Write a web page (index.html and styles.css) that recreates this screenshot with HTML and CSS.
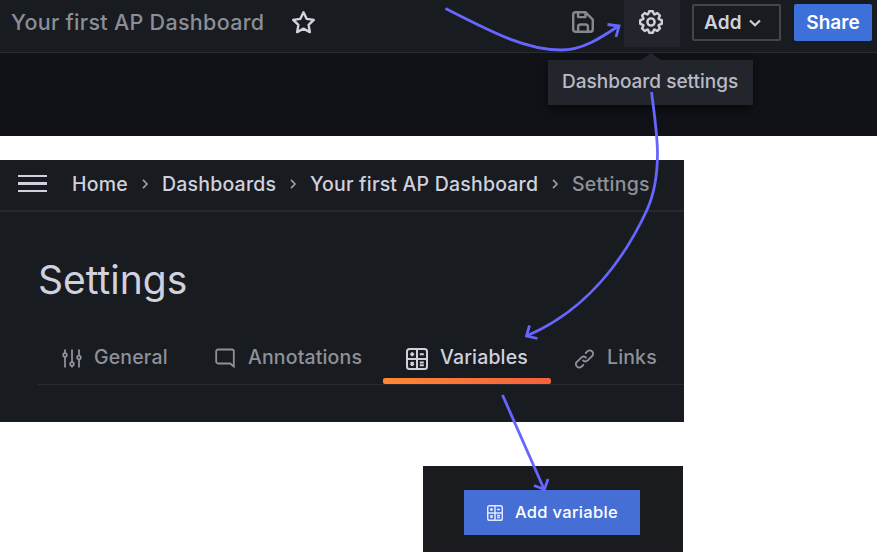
FILE: index.html
```html
<!DOCTYPE html>
<html lang="en">
<head>
<meta charset="utf-8">
<title>Dashboard settings</title>
<link rel="stylesheet" href="styles.css">
</head>
<body>
<main class="page">
  <section class="dashboard">
    <header class="toolbar">
      <span class="toolbar-title">Your first AP Dashboard</span>
      <svg class="star" viewBox="0 0 24 24"><path d="M12 2.200l3 6.300 6.900 1-5 4.800 1.200 6.900-6.100-3.300-6.100 3.300 1.200-6.900-5-4.800 6.900-1z"/></svg>
      <svg class="save" viewBox="3 3 18 18"><path d="M20.71,9.29l-6-6a1,1,0,0,0-.32-.21A1.09,1.09,0,0,0,14,3H6A3,3,0,0,0,3,6V18a3,3,0,0,0,3,3H18a3,3,0,0,0,3-3V10A1,1,0,0,0,20.71,9.29ZM9,5h4V7H9Zm6,14H9V16a1,1,0,0,1,1-1h4a1,1,0,0,1,1,1Zm4-1a1,1,0,0,1-1,1H17V16a3,3,0,0,0-3-3H10a3,3,0,0,0-3,3v3H6a1,1,0,0,1-1-1V6A1,1,0,0,1,6,5H7V8A1,1,0,0,0,8,9h6a1,1,0,0,0,1-1V6.41l4,4Z"/></svg>
      <div class="gear-tile">
        <svg class="gear" viewBox="2 2 20 20"><path d="M21.32,9.55l-1.89-.63.89-1.78A1,1,0,0,0,20.13,6L18,3.87a1,1,0,0,0-1.15-.19l-1.78.89-.63-1.89A1,1,0,0,0,13.5,2h-3a1,1,0,0,0-.95.68L8.92,4.57,7.14,3.68A1,1,0,0,0,6,3.87L3.87,6a1,1,0,0,0-.19,1.15l.89,1.78-1.89.63A1,1,0,0,0,2,10.5v3a1,1,0,0,0,.68.95l1.89.63-.89,1.78A1,1,0,0,0,3.87,18L6,20.13a1,1,0,0,0,1.15.19l1.78-.89.63,1.89a1,1,0,0,0,.95.68h3a1,1,0,0,0,.95-.68l.63-1.89,1.78.89A1,1,0,0,0,18,20.13L20.13,18a1,1,0,0,0,.19-1.15l-.89-1.78,1.89-.63A1,1,0,0,0,22,13.5v-3A1,1,0,0,0,21.32,9.55ZM20,12.78l-1.2.4A2,2,0,0,0,17.64,16l.57,1.14-1.1,1.1L16,17.64a2,2,0,0,0-2.79,1.16l-.4,1.2H11.22l-.4-1.2A2,2,0,0,0,8,17.64l-1.14.57-1.1-1.1L6.36,16A2,2,0,0,0,5.2,13.18L4,12.78V11.22l1.2-.4A2,2,0,0,0,6.36,8L5.79,6.89l1.1-1.1L8,6.36A2,2,0,0,0,10.82,5.2l.4-1.2h1.56l.4,1.2A2,2,0,0,0,16,6.36l1.14-.57,1.1,1.1L17.64,8a2,2,0,0,0,1.16,2.79l1.2.4ZM12,8a4,4,0,1,0,4,4A4,4,0,0,0,12,8Zm0,6a2,2,0,1,1,2-2A2,2,0,0,1,12,14Z"/></svg>
        <div class="tooltip">Dashboard settings</div>
      </div>
      <div class="add-menu"><span>Add</span><svg class="chevron" viewBox="0 0 14 10"><path d="M2 2.500l5 4.800 5-4.800"/></svg></div>
      <div class="share">Share</div>
    </header>
  </section>

  <section class="settings">
    <nav class="crumbs">
      <div class="menu"><i></i><i></i><i></i></div>
      <span class="crumb home">Home</span>
      <svg class="sep" viewBox="0 0 8 12"><path d="M2 1.800l4 4.200-4 4.200"/></svg>
      <span class="crumb boards">Dashboards</span>
      <svg class="sep" viewBox="0 0 8 12"><path d="M2 1.800l4 4.200-4 4.200"/></svg>
      <span class="crumb first">Your first AP Dashboard</span>
      <svg class="sep" viewBox="0 0 8 12"><path d="M2 1.800l4 4.200-4 4.200"/></svg>
      <span class="crumb current">Settings</span>
    </nav>
    <h1>Settings</h1>
    <div class="tabs">
      <div class="tab general">
        <svg viewBox="0 0 20 20"><path d="M3 0.500v3.500M3 8V18.500M10 0.500v12.500M10 17v1.500M17 0.500v6M17 10.500V18.500"/><circle cx="3" cy="6" r="1.800"/><circle cx="10" cy="15" r="1.800"/><circle cx="17" cy="8.500" r="1.800"/></svg>
        <span>General</span>
      </div>
      <div class="tab annotations">
        <svg viewBox="0 0 20 20"><path d="M3 1.500h14a1.800 1.800 0 0 1 1.800 1.800V18.500l-3.600-3H3a1.800 1.800 0 0 1-1.800-1.800V3.300A1.800 1.800 0 0 1 3 1.500z"/></svg>
        <span>Annotations</span>
      </div>
      <div class="tab variables">
        <svg viewBox="0 0 22 22"><rect x="1" y="1" width="20" height="20" rx="2.500"/><path d="M11 1v20M1 11h20M4.200 6.200h4M6.200 4.200v4M13.800 6.200h4M4.700 14.300l3 3M7.700 14.300l-3 3M13.800 14.500h4M13.800 17.300h4"/></svg>
        <span>Variables</span>
      </div>
      <div class="tab links">
        <svg viewBox="2 2 20 20"><path d="M10,17.55,8.23,19.27a2.47,2.47,0,0,1-3.5-3.5l4.54-4.55a2.46,2.46,0,0,1,3.39-.09l.12.1a1,1,0,0,0,1.4-1.43A2.75,2.75,0,0,0,14,9.59a4.46,4.46,0,0,0-6.09.22L3.31,14.36a4.48,4.48,0,0,0,6.33,6.33L11.37,19A1,1,0,0,0,10,17.55ZM20.69,3.31a4.49,4.49,0,0,0-6.33,0L12.63,5A1,1,0,0,0,14,6.45l1.73-1.72a2.47,2.47,0,0,1,3.5,3.5l-4.54,4.55a2.46,2.46,0,0,1-3.39.09l-.12-.1a1,1,0,0,0-1.4,1.43,2.75,2.75,0,0,0,.23.21,4.47,4.47,0,0,0,6.09-.22l4.55-4.55A4.49,4.49,0,0,0,20.69,3.31Z"/></svg>
        <span>Links</span>
      </div>
    </div>
  </section>

  <section class="new-variable">
    <div class="add-variable">
      <svg viewBox="0 0 22 22"><rect x="1" y="1" width="20" height="20" rx="2.500"/><path d="M11 1v20M1 11h20M4.200 6.200h4M6.200 4.200v4M13.800 6.200h4M4.700 14.300l3 3M7.700 14.300l-3 3M13.800 14.500h4M13.800 17.300h4"/></svg>
      <span>Add variable</span>
    </div>
  </section>

  <svg class="arrows" viewBox="0 0 877 552">
    <path d="M445.500 8.500C490 31 525 50 561 50C583 50 602 37 618.500 26"/>
    <path d="M607.500 24.500L619 26L616 37"/>
    <path d="M651.500 92C655 118 657.500 138 657.500 153C657.500 176 654 195 646.500 211C632 242 597 306 526.500 336"/>
    <path d="M529.500 325.500L526.500 336L537.500 338.500"/>
    <path d="M502.500 395L544 489"/>
    <path d="M534 485.500L544.500 489.500L548 479"/>
  </svg>
</main>
</body>
</html>
```
FILE: styles.css
```css
* { box-sizing: border-box; }
body { margin: 0; background: #fff; font-family: Inter, "Liberation Sans", sans-serif; }
svg { display: block; flex: none; }
span { white-space: nowrap; }
.page { position: relative; width: 877px; height: 552px; overflow: hidden; }

.dashboard { height: 136px; background: #111217; }
.toolbar { display: flex; height: 53px; padding-left: 11px; background: #181b1f; border-bottom: 1.500px solid #292c31; }
.toolbar-title { width: 280px; color: #8b8d97; font-size: 21.500px; font-weight: 450; line-height: 45px; letter-spacing: 0.300px; }
.star { width: 25px; height: 25px; margin-top: 10px; fill: none; stroke: #d2d3df; stroke-width: 2.300; stroke-linejoin: round; }
.save { width: 22px; height: 22px; margin: 11px 30px 0 256px; fill: #85878c; }
.gear-tile { position: relative; width: 56px; height: 47px; padding: 10px 0 0 15px; background: #22252b; }
.gear { width: 24px; height: 24px; fill: #d0d1d9; }
.tooltip { position: absolute; top: 60px; left: -76px; width: 205px; height: 45px; padding-left: 14px; background: #22252b; box-shadow: 0 4px 8px #08090c; color: #b9bac4; font-size: 19px; font-weight: 500; line-height: 43px; white-space: nowrap; }
.tooltip::before { content: ""; position: absolute; top: -7px; left: 93px; border: solid transparent; border-width: 0 10px 7px; border-bottom-color: #22252b; }
.add-menu { display: flex; align-items: center; gap: 6px; width: 89px; height: 37px; margin: 4px 13px 0 12px; padding-left: 10px; border: 2px solid #42454a; border-radius: 2px; color: #d0d1dc; font-size: 19px; font-weight: 600; letter-spacing: 0.200px; }
.chevron { width: 14px; height: 10px; fill: none; stroke: #d0d1dc; stroke-width: 2.200; }
.share { width: 78px; height: 37px; margin-top: 4px; border-radius: 2px; background: #3d71d9; color: #fff; font-size: 19px; font-weight: 600; line-height: 37px; text-align: center; }

.settings { width: 684px; height: 262px; margin-top: 24px; background: #181b1f; }
.crumbs { display: flex; align-items: center; height: 52px; padding: 0 0 3px 18px; border-bottom: 2px solid #25282d; color: #d0d1de; font-size: 19.500px; font-weight: 450; letter-spacing: 0.200px; }
.menu { display: flex; flex-direction: column; gap: 5px; width: 54px; }
.menu i { width: 29px; height: 2.500px; background: #d0d1de; }
.sep { width: 8px; height: 12px; margin: 1px 0 0; fill: none; stroke: #9a9ca5; stroke-width: 1.700; }
.home { width: 69px; }
.boards { width: 127px; margin-left: 13px; }
.first { width: 241px; margin-left: 13px; }
.current { margin-left: 13px; color: #8f919a; }
h1 { margin: 0; padding: 42px 0 0 38px; color: #d0d1de; font-size: 39px; font-weight: 400; line-height: 52px; letter-spacing: 0; }
.tabs { display: flex; height: 54px; margin: 25px 0 0 38px; border-bottom: 1.500px solid #292c30; }
.tab { display: flex; align-items: flex-start; color: #8f919a; font-size: 19.500px; font-weight: 450; line-height: 24px; letter-spacing: 0.150px; }
.tab svg { width: 20px; height: 20px; fill: none; stroke: currentColor; stroke-width: 1.800; }
.tab span { margin-top: 14px; }
.general { width: 154px; padding-left: 24px; }
.general svg { margin: 18px 12px 0 0; }
.annotations { width: 191px; padding-left: 23px; }
.annotations svg { margin: 17px 13px 0 0; }
.variables { position: relative; width: 167px; padding-left: 23px; color: #d0d1de; }
.tab.variables svg { width: 22px; height: 22px; margin: 17px 12px 0 0; stroke-width: 2; }
.variables::after { content: ""; position: absolute; left: 0; top: 47px; width: 168px; height: 6px; border-radius: 2px; background: linear-gradient(90deg, #ff8833, #f55f3e); }
.links { padding-left: 25px; }
.tab.links svg { width: 19px; margin: 18px 13px 0 0; fill: #8f919a; stroke: none; }

.new-variable { width: 260px; height: 86px; margin: 44px 0 0 423px; padding: 24px 0 0 41px; background: #1a1b1f; }
.add-variable { display: flex; align-items: center; gap: 12px; width: 176px; height: 45px; padding-left: 23px; background: #466fd5; color: #fff; font-size: 16.500px; font-weight: 500; letter-spacing: 0.300px; }
.add-variable span { margin-bottom: 2px; }
.add-variable svg { width: 16px; height: 16px; fill: none; stroke: #e4eaff; stroke-width: 2; }

.arrows { position: absolute; inset: 0; width: 877px; height: 552px; fill: none; stroke: #6666ff; stroke-width: 2.800; }
```
